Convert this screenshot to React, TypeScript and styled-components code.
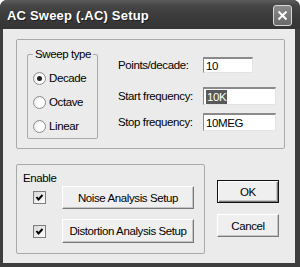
import styled, { createGlobalStyle } from 'styled-components';

const GlobalStyle = createGlobalStyle`
  html, body {
    margin: 0;
    padding: 0;
    background: #ffffff;
  }
  body {
    font-family: 'Liberation Sans', Arial, sans-serif;
  }
`;

const Window = styled.div`
  width: 300px;
  height: 267px;
  display: flex;
  flex-direction: column;
  background: #3e3e3e;
  border-radius: 7px 7px 0 0;
  overflow: hidden;
`;

const TitleBar = styled.div`
  height: 29px;
  flex: 0 0 29px;
  display: flex;
  align-items: center;
  justify-content: space-between;
  padding: 0 8px 0 7px;
  background: linear-gradient(#5c5c5c 0%, #454545 20%, #3a3a3a 60%, #353535 100%);
`;

const Title = styled.div`
  color: #ffffff;
  font-family: 'Liberation Sans', Arial, sans-serif;
  font-weight: bold;
  font-size: 13px;
  letter-spacing: 0.2px;
  text-shadow: 1px 1px 0 #1e1e1e;
  padding-top: 1px;
`;

const CloseButton = styled.div`
  width: 17px;
  height: 19px;
  margin-top: 1px;
  border: 1px solid #d8d8d8;
  border-radius: 3px;
  background: linear-gradient(#8a8a8a, #6a6a6a);
  display: flex;
  align-items: center;
  justify-content: center;
`;

const Client = styled.div`
  flex: 1;
  margin: 0 5px 4px 3px;
  background: #ebebeb;
  padding: 10px 0 0 13px;
  font-size: 11.5px;
  letter-spacing: -0.4px;
  color: #000000;
`;

const GroupBox = styled.div<{ $w: number; $h: number }>`
  box-sizing: border-box;
  width: ${(p) => p.$w}px;
  height: ${(p) => p.$h}px;
  border: 1px solid #a9a9a9;
  border-radius: 2px;
`;

const TopGroup = styled(GroupBox)`
  display: flex;
  align-items: flex-start;
`;

const SweepBox = styled(GroupBox)`
  margin: 14px 0 0 10px;
  display: flex;
  flex-direction: column;
`;

const Legend = styled.div`
  align-self: flex-start;
  margin: -7px 0 0 5px;
  padding: 0 2px;
  line-height: 13px;
  background: #ebebeb;
`;

const RadioList = styled.div`
  padding: 5px 0 0 5px;
  display: flex;
  flex-direction: column;
`;

const RadioRow = styled.div`
  height: 24px;
  display: flex;
  align-items: center;
  gap: 3px;
`;

const Radio = styled.span<{ $on?: boolean }>`
  box-sizing: border-box;
  width: 13px;
  height: 13px;
  border-radius: 50%;
  border: 1px solid #8e8e8e;
  background: radial-gradient(circle at 60% 60%, #ffffff 40%, #dcdcdc 100%);
  display: flex;
  align-items: center;
  justify-content: center;
  &::after {
    content: '';
    width: 5px;
    height: 5px;
    border-radius: 50%;
    background: ${(p) => (p.$on ? '#222222' : 'transparent')};
  }
`;

const Fields = styled.div`
  margin: 17px 0 0 20px;
  display: flex;
  flex-direction: column;
`;

const FieldRow = styled.div<{ $gap: number }>`
  display: flex;
  align-items: center;
  margin-top: ${(p) => p.$gap}px;
`;

const FieldLabel = styled.div`
  width: 85px;
`;

const Input = styled.div<{ $w: number; $h: number }>`
  box-sizing: border-box;
  width: ${(p) => p.$w}px;
  height: ${(p) => p.$h}px;
  background: #ffffff;
  border-style: solid;
  border-width: 2px 1px 1px 1px;
  border-color: #8a8a8a #e4e4e4 #e4e4e4 #8a8a8a;
  padding-left: 2px;
  display: flex;
  align-items: center;
`;

const Selected = styled.span`
  background: #595959;
  color: #ffffff;
  padding: 0 1px;
  line-height: 14px;
`;

const BottomRow = styled.div`
  display: flex;
  margin-top: 15px;
`;

const EnableGroup = styled(GroupBox)`
  padding: 7px 0 0 6px;
`;

const EnableLabel = styled.div`
  line-height: 13px;
`;

const CheckRow = styled.div<{ $gap: number }>`
  display: flex;
  align-items: center;
  margin: ${(p) => p.$gap}px 0 0 10px;
  gap: 16px;
`;

const Check = styled.span`
  box-sizing: border-box;
  width: 13px;
  height: 13px;
  border: 1px solid #7c7c7c;
  background: linear-gradient(135deg, #d6d6d6, #ffffff);
  display: flex;
  align-items: center;
  justify-content: center;
`;

const Button = styled.div<{ $w: number; $h: number; $default?: boolean }>`
  box-sizing: border-box;
  width: ${(p) => p.$w}px;
  height: ${(p) => p.$h}px;
  display: flex;
  align-items: center;
  justify-content: center;
  background: #efefef;
  border: 1px solid ${(p) => (p.$default ? '#111111' : '#ffffff')};
  border-right-color: ${(p) => (p.$default ? '#111111' : '#7a7a7a')};
  border-bottom-color: ${(p) => (p.$default ? '#111111' : '#7a7a7a')};
  box-shadow: ${(p) =>
    p.$default
      ? 'inset 1px 1px #ffffff, inset -1px -1px #7a7a7a, inset -2px -2px #c4c4c4'
      : 'inset -1px -1px #c4c4c4'};
`;

const ButtonColumn = styled.div`
  display: flex;
  flex-direction: column;
  gap: 11px;
  margin: 16px 0 0 12px;
`;

const CheckMark = () => (
  <svg width="9" height="9" viewBox="0 0 9 9">
    <path d="M1.5 4 L3.5 6.5 L7.5 2" fill="none" stroke="#000" strokeWidth="2" />
  </svg>
);

const sweepTypes = [
  { label: 'Decade', on: true },
  { label: 'Octave', on: false },
  { label: 'Linear', on: false },
];

export default function App() {
  return (
    <>
      <GlobalStyle />
      <Window>
        <TitleBar>
          <Title>AC Sweep (.AC) Setup</Title>
          <CloseButton>
            <svg width="11" height="11" viewBox="0 0 11 11">
              <path d="M1.5 1.5 L9.5 9.5 M9.5 1.5 L1.5 9.5" stroke="#ffffff" strokeWidth="2" />
            </svg>
          </CloseButton>
        </TitleBar>
        <Client>
          <TopGroup $w={269} $h={110}>
            <SweepBox $w={71} $h={85}>
              <Legend>Sweep type</Legend>
              <RadioList>
                {sweepTypes.map((s) => (
                  <RadioRow key={s.label}>
                    <Radio $on={s.on} />
                    {s.label}
                  </RadioRow>
                ))}
              </RadioList>
            </SweepBox>
            <Fields>
              <FieldRow $gap={0}>
                <FieldLabel>Points/decade:</FieldLabel>
                <Input $w={50} $h={16}>10</Input>
              </FieldRow>
              <FieldRow $gap={14}>
                <FieldLabel>Start frequency:</FieldLabel>
                <Input $w={73} $h={18}>
                  <Selected>10K</Selected>
                </Input>
              </FieldRow>
              <FieldRow $gap={8}>
                <FieldLabel>Stop frequency:</FieldLabel>
                <Input $w={73} $h={18}>10MEG</Input>
              </FieldRow>
            </Fields>
          </TopGroup>
          <BottomRow>
            <EnableGroup $w={189} $h={90}>
              <EnableLabel>Enable</EnableLabel>
              <CheckRow $gap={1}>
                <Check>
                  <CheckMark />
                </Check>
                <Button $w={132} $h={23}>Noise Analysis Setup</Button>
              </CheckRow>
              <CheckRow $gap={10}>
                <Check>
                  <CheckMark />
                </Check>
                <Button $w={132} $h={24}>Distortion Analysis Setup</Button>
              </CheckRow>
            </EnableGroup>
            <ButtonColumn>
              <Button $w={62} $h={23} $default>OK</Button>
              <Button $w={62} $h={23}>Cancel</Button>
            </ButtonColumn>
          </BottomRow>
        </Client>
      </Window>
    </>
  );
}
